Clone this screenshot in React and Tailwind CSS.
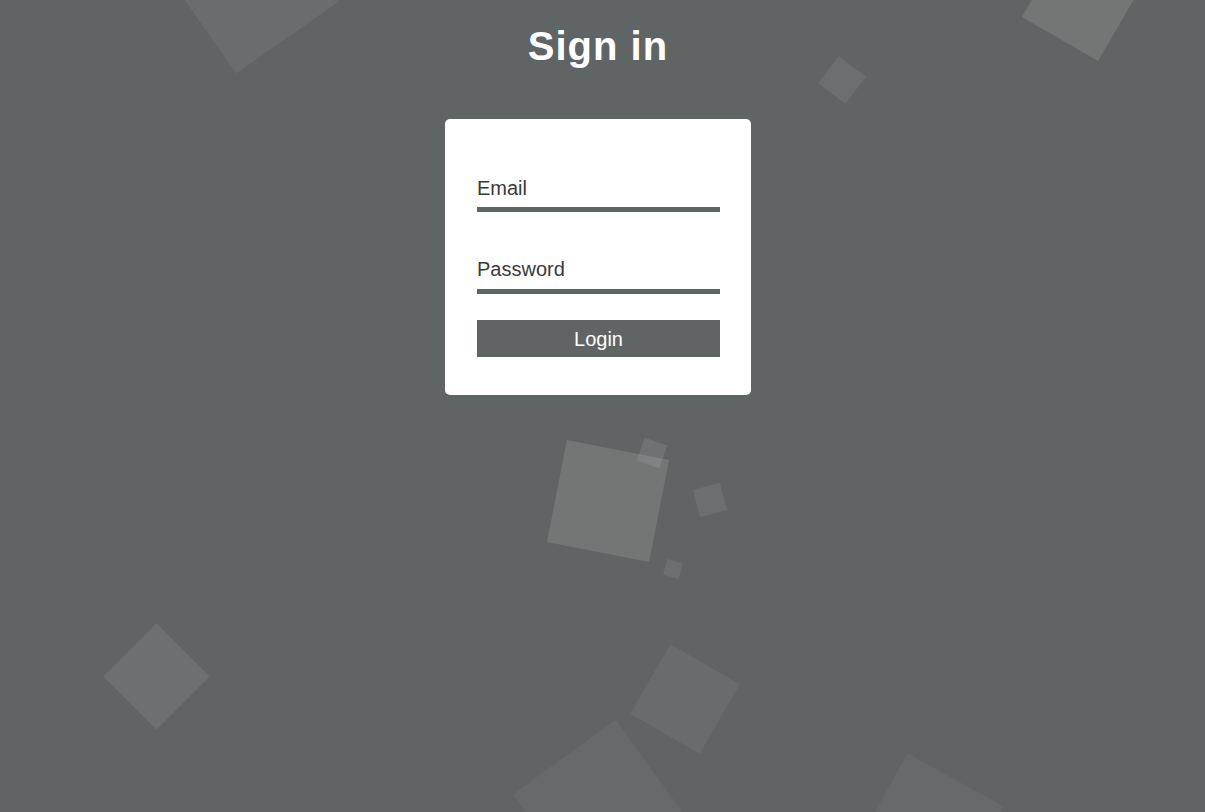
const squares = [
  "left-[189px] top-[-76px] w-[125px] h-[125px] rotate-[55deg] bg-white/[0.06]",
  "left-[1038px] top-[-43px] w-[88px] h-[88px] rotate-[30deg] bg-white/[0.12]",
  "left-[825px] top-[63px] w-[34px] h-[34px] rotate-[37deg] bg-white/[0.07]",
  "left-[556px] top-[449px] w-[104px] h-[104px] rotate-[11deg] bg-white/[0.12]",
  "left-[640px] top-[441px] w-[24px] h-[24px] rotate-[19deg] bg-white/[0.09]",
  "left-[696px] top-[486px] w-[28px] h-[28px] rotate-[-15deg] bg-white/[0.07]",
  "left-[665px] top-[561px] w-[16px] h-[16px] rotate-[16deg] bg-white/[0.07]",
  "left-[119px] top-[639px] w-[75px] h-[75px] rotate-45 bg-white/[0.08]",
  "left-[645px] top-[659px] w-[80px] h-[80px] rotate-[30deg] bg-white/[0.05]",
  "left-[538px] top-[745px] w-[127px] h-[127px] rotate-[-36deg] bg-white/[0.04]",
  "left-[874px] top-[773px] w-[110px] h-[110px] rotate-[29deg] bg-white/[0.04]",
];

export default function App() {
  return (
    <div className="relative h-[812px] w-full overflow-hidden bg-[#5f6564] font-['Liberation_Sans',Arial,sans-serif]">
      {squares.map((cls, i) => (
        <div key={i} className={`absolute ${cls}`} />
      ))}
      <div className="relative z-10 flex flex-col items-center pr-[9px]">
        <h1 className="pt-[22px] text-[40px] font-bold leading-[48px] tracking-[1px] text-white">Sign in</h1>
        <form className="mt-[49px] w-[306px] rounded-[5px] bg-white pb-[38px] pl-[32px] pr-[31px] pt-[58px]">
          <input
            type="email"
            placeholder="Email"
            className="block h-[35px] w-full border-b-[5px] border-[#5f6564] pb-[8px] text-[20px] leading-[22px] text-[#333] outline-none placeholder:text-[#3a3a3a]"
          />
          <input
            type="password"
            placeholder="Password"
            className="mt-[46px] block h-[36px] w-full border-b-[5px] border-[#5f6564] pb-[9px] text-[20px] leading-[22px] text-[#333] outline-none placeholder:text-[#3a3a3a]"
          />
          <button type="button" className="mt-[26px] block h-[37px] w-full bg-[#5f6564] text-[20px] leading-[22px] text-white">
            Login
          </button>
        </form>
      </div>
    </div>
  );
}
